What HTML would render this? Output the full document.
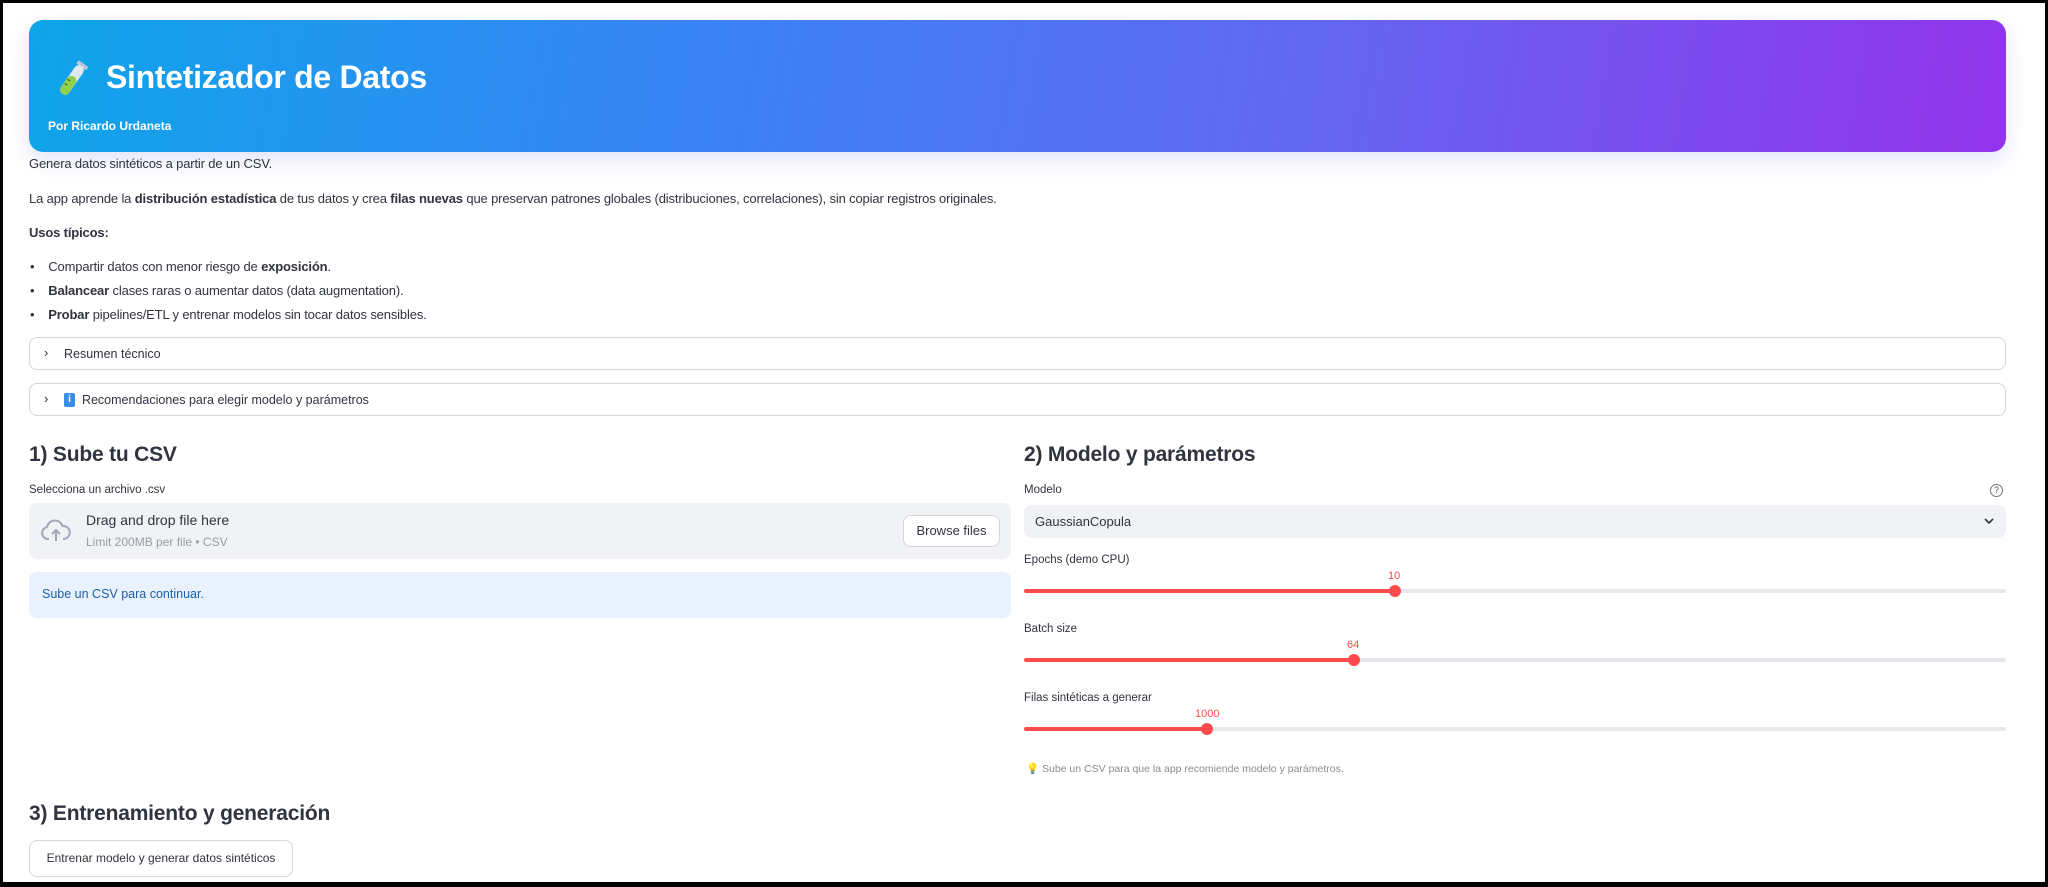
<!DOCTYPE html>
<html><head><meta charset="utf-8">
<style>
*{box-sizing:border-box;margin:0;padding:0}
html,body{width:2048px;height:887px;overflow:hidden;background:#fff}
body{font-family:"Liberation Sans",sans-serif;color:#31333f;position:relative;border:3px solid #000;border-bottom-width:5px}
.a{position:absolute;white-space:nowrap}
.hdr{position:absolute;left:26px;top:17px;width:1977px;height:132px;border-radius:14px;background:linear-gradient(100deg,#0ea5e9 0%,#3b82f6 35%,#6366f1 65%,#9333ea 100%);box-shadow:0 8px 20px rgba(99,102,241,.18)}
.t{font-size:13px;letter-spacing:-0.15px}
b{font-weight:700}
.exp{position:absolute;left:26px;width:1977px;border:1px solid #d6d6d9;border-radius:8px;height:33px;font-size:12.5px}
.exp span{position:absolute;left:34px;top:8px;line-height:16px}
.exp i{position:absolute;left:14px;top:7px;font-style:normal;font-size:13px}
h2{position:absolute;font-size:21px;font-weight:700;white-space:nowrap;letter-spacing:-0.2px}
.lbl{font-size:12px}
.track{position:absolute;left:1021px;width:982px;height:4px;background:#e6e7eb;border-radius:2px}
.fill{position:absolute;left:0;top:0;height:4px;background:#ff4b4b;border-radius:2px}
.th{position:absolute;top:-4px;width:12px;height:12px;border-radius:50%;background:#ff4b4b;margin-left:-6px}
.val{position:absolute;font-size:11px;color:#ff4b4b}
</style></head><body>
<div class="hdr">
  <svg class="a" style="left:23px;top:38px" width="40" height="44" viewBox="0 0 40 44">
    <g transform="rotate(35 20 22)">
      <rect x="14" y="2" width="12" height="4" rx="1" fill="#b9c6d6"/>
      <rect x="15" y="5" width="10" height="34" rx="5" fill="#dfe8f2"/>
      <rect x="15" y="18" width="10" height="21" rx="5" fill="#8fd14f"/>
      <line x1="16" y1="24" x2="19" y2="24" stroke="#3a5a1a" stroke-width="1"/>
      <line x1="16" y1="29" x2="19" y2="29" stroke="#3a5a1a" stroke-width="1"/>
    </g>
  </svg>
  <div class="a" style="left:77px;top:39px;font-size:32px;font-weight:700;color:#fff;letter-spacing:-0.3px">Sintetizador de Datos</div>
  <div class="a" style="left:19px;top:99px;font-size:12px;font-weight:700;color:#fff">Por Ricardo Urdaneta</div>
</div>
<div class="a t" style="left:26px;top:153px">Genera datos sintéticos a partir de un CSV.</div>
<div class="a t" style="left:26px;top:188px">La app aprende la <b>distribución estadística</b> de tus datos y crea <b>filas nuevas</b> que preservan patrones globales (distribuciones, correlaciones), sin copiar registros originales.</div>
<div class="a t" style="left:26px;top:222px"><b>Usos típicos:</b></div>
<div class="a t" style="left:27px;top:256px">•&nbsp;&nbsp;&nbsp;&nbsp;Compartir datos con menor riesgo de <b>exposición</b>.</div>
<div class="a t" style="left:27px;top:280px">•&nbsp;&nbsp;&nbsp;&nbsp;<b>Balancear</b> clases raras o aumentar datos (data augmentation).</div>
<div class="a t" style="left:27px;top:304px">•&nbsp;&nbsp;&nbsp;&nbsp;<b>Probar</b> pipelines/ETL y entrenar modelos sin tocar datos sensibles.</div>
<div class="exp" style="top:334px"><i>›</i><span>Resumen técnico</span></div>
<div class="exp" style="top:380px"><i>›</i><span><b style="display:inline-block;width:11px;height:14px;background:#3b8ee8;color:#fff;font-size:10px;line-height:14px;text-align:center;border-radius:2px;vertical-align:top;margin-top:1px">i</b>&nbsp; Recomendaciones para elegir modelo y parámetros</span></div>

<h2 style="left:26px;top:440px">1) Sube tu CSV</h2>
<div class="a lbl" style="left:26px;top:481px;font-size:11.5px">Selecciona un archivo .csv</div>
<div class="a" style="left:26px;top:500px;width:982px;height:56px;background:#f0f2f6;border-radius:8px">
  <svg class="a" style="left:12px;top:15px" width="30" height="26" viewBox="0 0 30 26"><path d="M8 21H7a6 6 0 0 1-1-11.9A8 8 0 0 1 21.5 8 6.5 6.5 0 0 1 23 21h-1" fill="none" stroke="#a3a8b8" stroke-width="2"/><path d="M15 23V13M11 16l4-4 4 4" fill="none" stroke="#a3a8b8" stroke-width="2"/></svg>
  <div class="a" style="left:57px;top:9px;font-size:14px">Drag and drop file here</div>
  <div class="a" style="left:57px;top:32px;font-size:12px;color:#9a9ca5">Limit 200MB per file • CSV</div>
  <div class="a" style="left:874px;top:12px;width:97px;height:32px;background:#fff;border:1px solid #d6d6d9;border-radius:8px;font-size:13px;text-align:center;line-height:30px">Browse files</div>
</div>
<div class="a" style="left:26px;top:569px;width:982px;height:46px;background:#e8f1fd;border-radius:8px;font-size:12.5px;color:#1e5fa8;padding:15px 0 0 13px">Sube un CSV para continuar.</div>

<h2 style="left:1021px;top:440px">2) Modelo y parámetros</h2>
<div class="a lbl" style="left:1021px;top:481px;font-size:11.5px">Modelo</div>
<div class="a" style="left:1987px;top:481px;width:13px;height:13px;border:1px solid #777;border-radius:50%;font-size:9px;text-align:center;line-height:11px;color:#555">?</div>
<div class="a" style="left:1021px;top:502px;width:982px;height:33px;background:#f0f2f6;border-radius:8px;font-size:13px;padding:9px 0 0 11px">GaussianCopula<svg class="a" style="right:12px;top:13px" width="10" height="7" viewBox="0 0 10 7"><path d="M1 1l4 4 4-4" fill="none" stroke="#31333f" stroke-width="1.6"/></svg></div>
<div class="a lbl" style="left:1021px;top:551px;font-size:11.5px">Epochs (demo CPU)</div>
<div class="val" style="left:1385px;top:567px">10</div>
<div class="track" style="top:586px"><div class="fill" style="width:371px"></div><div class="th" style="left:371px"></div></div>
<div class="a lbl" style="left:1021px;top:620px;font-size:11.5px">Batch size</div>
<div class="val" style="left:1344px;top:636px">64</div>
<div class="track" style="top:655px"><div class="fill" style="width:330px"></div><div class="th" style="left:330px"></div></div>
<div class="a lbl" style="left:1021px;top:689px;font-size:11.5px">Filas sintéticas a generar</div>
<div class="val" style="left:1192px;top:705px">1000</div>
<div class="track" style="top:724px"><div class="fill" style="width:183px"></div><div class="th" style="left:183px"></div></div>
<div class="a" style="left:1023px;top:759px;font-size:10.5px;color:#8a8c95"><span style="color:#f5c542">💡</span> Sube un CSV para que la app recomiende modelo y parámetros.</div>

<h2 style="left:26px;top:799px">3) Entrenamiento y generación</h2>
<div class="a" style="left:26px;top:837px;width:264px;height:37px;border:1px solid #d6d6d9;border-radius:8px;font-size:12px;text-align:center;line-height:35px">Entrenar modelo y generar datos sintéticos</div>
</body></html>
